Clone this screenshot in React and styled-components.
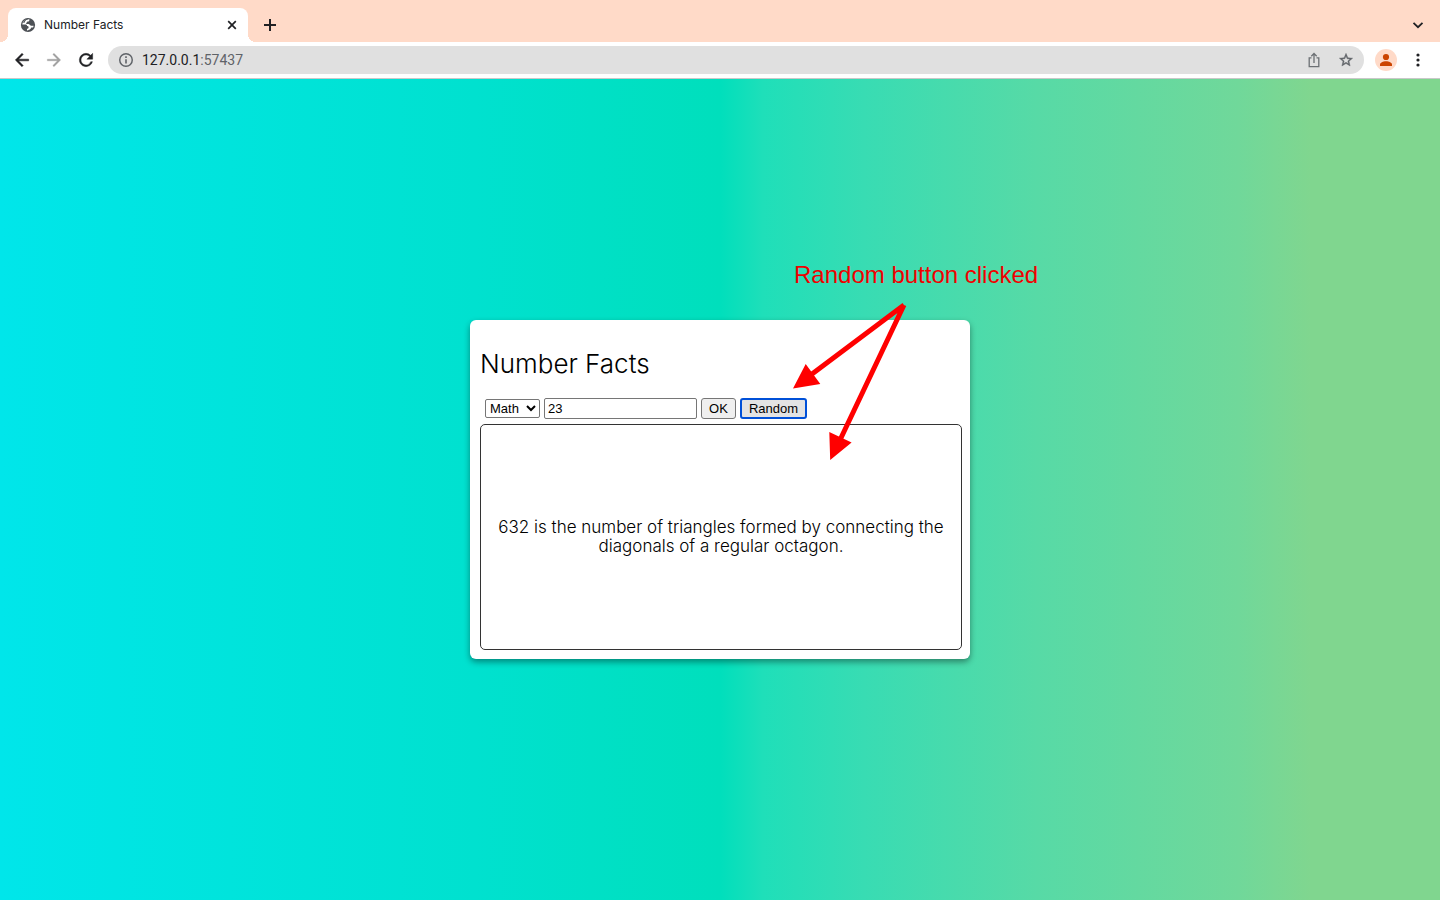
import React from 'react';
import styled, { createGlobalStyle } from 'styled-components';

const GlobalStyle = createGlobalStyle`
  * { box-sizing: border-box; }
  body { margin: 0; font-family: Roboto, "Liberation Sans", sans-serif; }
`;

const Window = styled.div`
  display: flex;
  flex-direction: column;
  min-height: 100vh;
`;

const TabStrip = styled.header`
  display: flex;
  align-items: flex-end;
  height: 42px;
  padding-left: 8px;
  background: #ffdac8;
`;

const Tab = styled.div`
  position: relative;
  display: flex;
  align-items: center;
  gap: 8px;
  width: 240px;
  height: 34px;
  padding: 0 8px 0 12px;
  border-radius: 8px 8px 0 0;
  background: #fff;
  color: #202124;
  font: 12px/16px Inter, sans-serif;

  &::before,
  &::after {
    content: '';
    position: absolute;
    bottom: 0;
    width: 8px;
    height: 8px;
  }
  &::before {
    right: 100%;
    background: radial-gradient(circle at 0 0, transparent 8px, #fff 8px);
  }
  &::after {
    left: 100%;
    background: radial-gradient(circle at 100% 0, transparent 8px, #fff 8px);
  }
`;

const TabTitle = styled.span`
  flex: 1;
`;

const IconButton = styled.button`
  display: flex;
  align-items: center;
  justify-content: center;
  flex: none;
  width: ${(p) => p.$size || 32}px;
  height: ${(p) => p.$size || 32}px;
  padding: 0;
  border: 0;
  background: none;
  color: ${(p) => p.$color || '#202124'};
`;

const NewTab = styled(IconButton)`
  height: 34px;
  margin-left: 6px;
`;

const TabSearch = styled(IconButton)`
  height: 34px;
  margin: 0 6px 0 auto;
`;

const Toolbar = styled.nav`
  display: flex;
  align-items: center;
  height: 37px;
  padding: 0 7px 0 6px;
  border-bottom: 1px solid #c8c8c8;
  background: #fff;
`;

const AddressBar = styled.div`
  display: flex;
  flex: 1;
  align-items: center;
  height: 28px;
  margin: 0 6px;
  padding: 0 2px 0 10px;
  border-radius: 14px;
  background: #e0e0e0;
`;

const Address = styled.div`
  flex: 1;
  margin-left: 8px;
  color: #5f6368;
  font-size: 14px;
`;

const Host = styled.span`
  color: #202124;
`;

const Avatar = styled.button`
  display: flex;
  align-items: center;
  justify-content: center;
  width: 22px;
  height: 22px;
  margin: 0 6px 0 5px;
  padding: 0;
  border: 0;
  border-radius: 50%;
  background: #ffdac8;
  color: #cc4400;
`;

const Page = styled.main`
  display: flex;
  flex: 1;
  align-items: center;
  justify-content: center;
  background: linear-gradient(
    to right,
    #00e6ea 0%,
    #00e4dc 16%,
    #00e1cf 33%,
    #00dfbc 50%,
    #1fdfb9 53%,
    #38dcb3 60%,
    #57daa6 72%,
    #70d89a 86%,
    #80d68f 91%,
    #80d68f 100%
  );
`;

const Card = styled.section`
  position: relative;
  width: 500px;
  padding: 30px 8px 9px 10px;
  border-radius: 6px;
  background: #fff;
  box-shadow: 0 3px 6px rgba(0, 0, 0, 0.4);
  color: #000;
`;

const Heading = styled.h1`
  margin: 0;
  font: 300 26px/28px Inter, sans-serif;
`;

const Form = styled.form`
  display: flex;
  align-items: center;
  gap: 4px;
  height: 21px;
  margin: 20px 0 5px;
  padding-left: 5px;
`;

const controlFont = '13px "Liberation Sans", Arial, sans-serif';

const Select = styled.select`
  width: 55px;
  height: 19px;
  padding: 0;
  border: 1px solid #767676;
  border-radius: 2px;
  background-color: #fff;
  color: #000;
  font: ${controlFont};
`;

const NumberInput = styled.input`
  width: 153px;
  height: 21px;
  padding: 1px 3px;
  border: 1px solid #767676;
  border-radius: 2px;
  background: #fff;
  color: #000;
  font: ${controlFont};
`;

const Button = styled.button`
  width: ${(p) => p.$width}px;
  height: 21px;
  padding: 0;
  border: ${(p) => (p.$focused ? '2px solid #0050d8' : '1px solid #767676')};
  border-radius: 3px;
  background: ${(p) => (p.$focused ? '#e3e3e3' : '#efefef')};
  color: #000;
  font: ${controlFont};
`;

const Fact = styled.div`
  display: flex;
  align-items: center;
  justify-content: center;
  height: 226px;
  padding: 0 12px;
  border: 1px solid #333;
  border-radius: 5px;
  font: 300 17px/19px Inter, sans-serif;
  text-align: center;
`;

const Annotation = styled.aside`
  position: absolute;
  top: -60px;
  left: 320px;
  width: 260px;
  padding-left: 4px;
  color: #f00000;
  font: 24px/30px "Liberation Sans", Arial, sans-serif;
  white-space: nowrap;
  pointer-events: none;
`;

const Arrows = styled.svg`
  position: absolute;
  top: 40px;
  left: 0;
`;

const Svg = ({ size = 16, children, ...rest }) => (
  <svg width={size} height={size} viewBox="0 0 24 24" fill="currentColor" aria-hidden="true" {...rest}>
    {children}
  </svg>
);

export default function App() {
  return (
    <Window>
      <GlobalStyle />
      <TabStrip>
        <Tab>
          <svg width="16" height="16" viewBox="0 0 16 16" aria-hidden="true">
            <circle cx="8" cy="8" r="7.1" fill="#4d5156" />
            <path
              d="M9.3 2.2c.4 1.6-.3 2.3-1.6 2.4-.9.1-.8 1.2-1.5 1.5v1h2.3c1.1 0 1.3 1.6 2.5 1.6h2.6c-.2 1.8-1.2 3.2-2.6 4-1.3.8-2.8 1-4 .6v-1.600c.9 0 1.600-.6 1.600-1.300 0-.8-.6-1.300-1.500-1.300 0-1-.7-1.500-1.600-1.500H2.300C2.400 5.200 3.900 3.200 6 2.500c1.100-.4 2.300-.4 3.300-.3z"
              fill="#fff"
            />
            <path
              d="M8.600 1.600c-2.600 0-4.800 1.700-5.600 4.200h1.600c.4-1.900 1.300-2.900 2.500-3.100.9-.2 1.300-.5 1.500-1.100zM8.200 14.300c2.500 0 4.700-1.500 5.600-3.800h-2.500c-.6 1.700-1.600 2.300-3.100 2.500z"
              fill="#4d5156"
            />
          </svg>
          <TabTitle>Number Facts</TabTitle>
          <IconButton $size={16} aria-label="Close tab">
            <svg width="16" height="16" viewBox="0 0 16 16" stroke="currentColor" strokeWidth="1.7" aria-hidden="true">
              <path d="M4.2 4.2l7.6 7.6M11.8 4.2l-7.6 7.6" />
            </svg>
          </IconButton>
        </Tab>
        <NewTab aria-label="New tab">
          <svg width="14" height="14" viewBox="0 0 14 14" stroke="currentColor" strokeWidth="2" aria-hidden="true">
            <path d="M7 1v12M1 7h12" />
          </svg>
        </NewTab>
        <TabSearch aria-label="Search tabs">
          <svg width="12" height="12" viewBox="0 0 12 12" fill="none" stroke="currentColor" strokeWidth="1.8" aria-hidden="true">
            <path d="M1.5 3.8L6 8.2l4.5-4.4" />
          </svg>
        </TabSearch>
      </TabStrip>
      <Toolbar>
        <IconButton aria-label="Back">
          <Svg size={20}><path d="M20 11H7.83l5.59-5.59L12 4l-8 8 8 8 1.41-1.41L7.83 13H20v-2z" stroke="currentColor" strokeWidth="0.6" /></Svg>
        </IconButton>
        <IconButton $color="#a0a0a0" aria-label="Forward">
          <Svg size={20}><path d="M12 4l-1.41 1.41L16.17 11H4v2h12.17l-5.58 5.59L12 20l8-8z" stroke="currentColor" strokeWidth="0.4" /></Svg>
        </IconButton>
        <IconButton aria-label="Reload">
          <Svg size={20}><path d="M17.65 6.35A7.958 7.958 0 0 0 12 4a8 8 0 1 0 7.73 10h-2.08A5.99 5.99 0 0 1 12 18a6 6 0 1 1 0-12c1.66 0 3.14.69 4.22 1.78L13 11h7V4l-2.35 2.35z" stroke="currentColor" strokeWidth="0.5" /></Svg>
        </IconButton>
        <AddressBar>
          <Svg size={16} fill="#5f6368"><path d="M10.8 6.5h2.4v2.4h-2.4zm0 4.3h2.4v6.5h-2.4zM12 1.5a10.5 10.5 0 1 0 0 21 10.5 10.5 0 0 0 0-21zm0 18.8a8.3 8.3 0 1 1 0-16.6 8.3 8.3 0 0 1 0 16.6z" /></Svg>
          <Address><Host>127.0.0.1</Host>:57437</Address>
          <IconButton $color="#6c7074" aria-label="Share">
            <svg width="16" height="16" viewBox="0 0 16 16" fill="none" stroke="currentColor" strokeWidth="1.3" aria-hidden="true">
              <path d="M5.5 5.8H3.2v8.8h9.6V5.8h-2.3M8 11V1.8M5.3 4.2L8 1.5l2.7 2.7" />
            </svg>
          </IconButton>
          <IconButton $color="#5f6368" aria-label="Bookmark this page">
            <Svg size={16}><path d="M22 9.24l-7.19-.62L12 2 9.19 8.63 2 9.24l5.46 4.73L5.82 21 12 17.27 18.18 21l-1.63-7.03L22 9.24zM12 15.4l-3.76 2.27 1-4.28-3.32-2.88 4.38-.38L12 6.1l1.71 4.04 4.38.38-3.32 2.88 1 4.28L12 15.4z" stroke="currentColor" strokeWidth="0.6" /></Svg>
          </IconButton>
        </AddressBar>
        <Avatar aria-label="Profile">
          <svg width="14" height="14" viewBox="0 0 14 14" fill="currentColor" aria-hidden="true">
            <circle cx="7" cy="4" r="3.1" />
            <path d="M1 13v-1.5C1 9.5 4 8.2 7 8.2s6 1.3 6 3.3V13z" />
          </svg>
        </Avatar>
        <IconButton $size={30} aria-label="Menu">
          <svg width="4" height="14" viewBox="0 0 4 14" fill="currentColor" aria-hidden="true">
            <circle cx="2" cy="2" r="1.6" />
            <circle cx="2" cy="7" r="1.6" />
            <circle cx="2" cy="12" r="1.6" />
          </svg>
        </IconButton>
      </Toolbar>
      <Page>
        <Card>
          <Heading>Number Facts</Heading>
          <Form onSubmit={(e) => e.preventDefault()}>
            <Select aria-label="Fact type" defaultValue="math">
              <option value="math">Math</option>
            </Select>
            <NumberInput aria-label="Number" type="text" defaultValue="23" />
            <Button $width={35} type="submit">OK</Button>
            <Button $width={67} $focused type="button">Random</Button>
          </Form>
          <Fact>632 is the number of triangles formed by connecting the diagonals of a regular octagon.</Fact>
          <Annotation>
            Random button clicked
            <Arrows width="120" height="165" viewBox="0 0 120 165" fill="#f00" aria-hidden="true">
              <path d="M114 5L22 74M114 5L50 140" stroke="#f00" strokeWidth="5" />
              <path d="M3 88.5L15.7 64l14.6 20zM40.2 160L39.3 132l22.3 10.5z" />
            </Arrows>
          </Annotation>
        </Card>
      </Page>
    </Window>
  );
}
